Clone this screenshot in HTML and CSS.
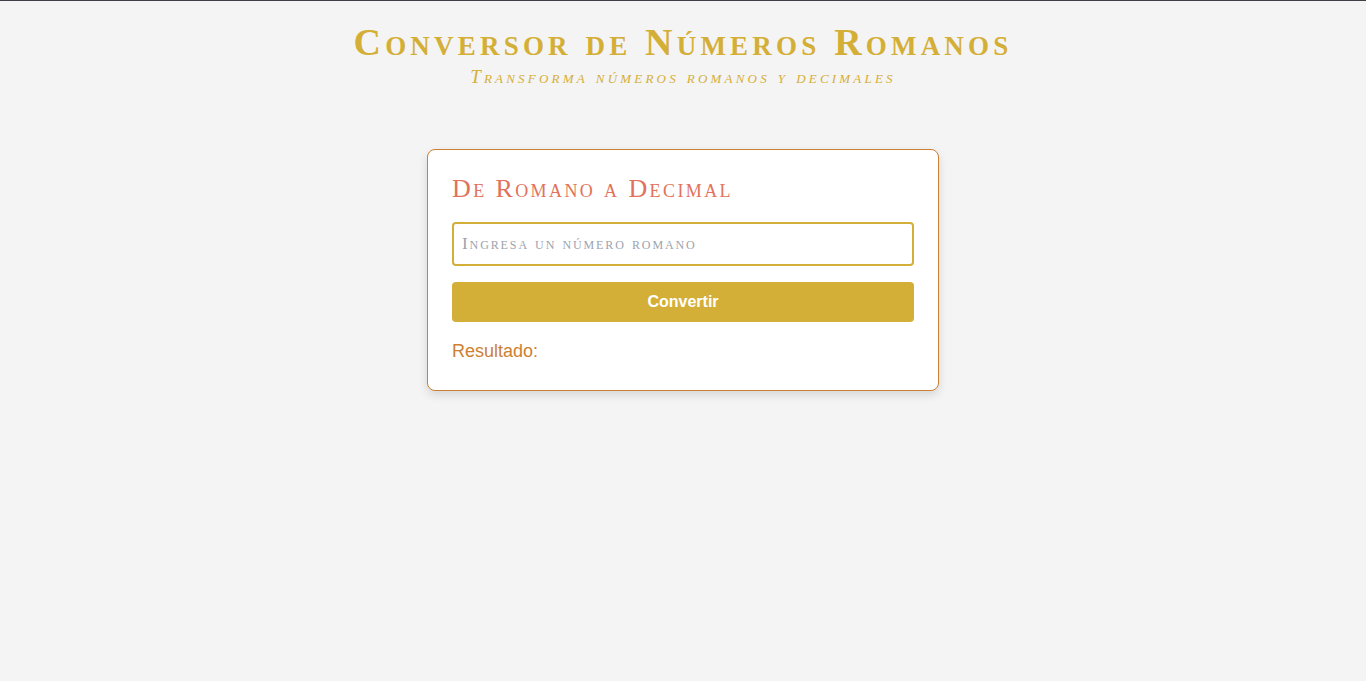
FILE: index.html
```html
<!DOCTYPE html>
<html lang="es">
<head>
<meta charset="utf-8">
<title>Conversor de Números Romanos</title>
<link rel="stylesheet" href="styles.css">
</head>
<body>
<header class="header">
  <h1 class="title">Conversor de Números Romanos</h1>
  <p class="subtitle">Transforma números romanos y decimales</p>
</header>
<main class="main">
  <section class="card">
    <h2 class="card-title">De Romano a Decimal</h2>
    <input class="input" type="text" placeholder="Ingresa un número romano">
    <button class="button" type="button">Convertir</button>
    <p class="result">Resultado:</p>
  </section>
</main>
</body>
</html>
```
FILE: styles.css
```css
html, body {
  margin: 0;
  padding: 0;
}
body {
  background: #f4f4f4;
  border-top: 1px solid #3e3e46;
  min-height: 680px;
  box-sizing: border-box;
  font-family: "Liberation Serif", serif;
}
.header {
  display: flex;
  flex-direction: column;
  align-items: center;
  padding-top: 20px;
}
.title {
  margin: 0;
  font-family: "Liberation Serif", serif;
  font-variant: small-caps;
  font-weight: bold;
  font-size: 38px;
  line-height: 42px;
  color: #d4af37;
  letter-spacing: 4.2px;
}
.subtitle {
  margin: 3px 0 0;
  font-style: italic;
  font-variant: small-caps;
  font-size: 19px;
  line-height: 22px;
  color: #d4af37;
  letter-spacing: 3.2px;
}
.main {
  display: flex;
  justify-content: center;
  padding-top: 61px;
}
.card {
  width: 512px;
  box-sizing: border-box;
  background: #fff;
  border: 1px solid #cd7f32;
  border-radius: 8px;
  padding: 25px 24px 28px;
  display: flex;
  flex-direction: column;
  box-shadow: 0 4px 10px rgba(0, 0, 0, 0.12);
}
.card-title {
  margin: 0 0 19px;
  font-family: "Liberation Serif", serif;
  font-variant: small-caps;
  font-weight: normal;
  font-size: 26px;
  line-height: 28px;
  color: #e2725b;
  letter-spacing: 2.4px;
}
.input {
  height: 44px;
  box-sizing: border-box;
  border: 2px solid #d4af37;
  border-radius: 4px;
  padding: 0 8px;
  font-family: "Liberation Serif", serif;
  font-variant: small-caps;
  font-size: 17px;
  letter-spacing: 1.9px;
  outline: none;
  background: #fff;
}
.input::placeholder {
  color: #9ca3af;
}
.button {
  margin-top: 16px;
  height: 40px;
  border: none;
  border-radius: 4px;
  background: #d4af37;
  color: #fff;
  font-family: "Liberation Sans", Arial, sans-serif;
  font-weight: bold;
  font-size: 16px;
}
.result {
  margin: 18px 0 0;
  font-family: "Liberation Sans", Arial, sans-serif;
  font-size: 18px;
  line-height: 22px;
  color: #cd7f32;
}
```
